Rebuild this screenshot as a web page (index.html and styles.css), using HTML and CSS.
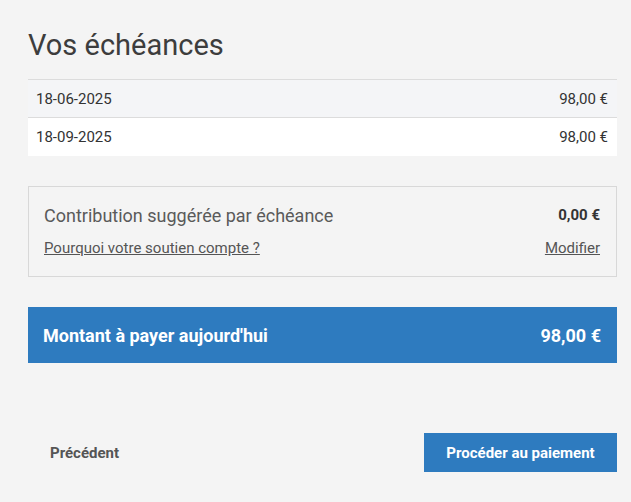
FILE: index.html
```html
<html>

<head>
    <title>Vos échéances</title>
    <link rel="stylesheet" href="styles.css">
</head>

<body>
    <div id="page">
        <h1>Vos échéances</h1>
        <div class="schedule">
            <div class="row odd">
                <span>18-06-2025</span>
                <span>98,00 €</span>
            </div>
            <div class="row">
                <span>18-09-2025</span>
                <span>98,00 €</span>
            </div>
        </div>
        <div class="contrib">
            <div class="contrib-top">
                <p class="contrib-label">Contribution suggérée par échéance</p>
                <p class="contrib-amount">0,00 €</p>
            </div>
            <div class="contrib-links">
                <a href="#">Pourquoi votre soutien compte ?</a>
                <a href="#">Modifier</a>
            </div>
        </div>
        <div class="total">
            <span>Montant à payer aujourd'hui</span>
            <span>98,00 €</span>
        </div>
        <div class="actions">
            <button class="backbtn">Précédent</button>
            <button class="paybtn">Procéder au paiement</button>
        </div>
    </div>
</body>

</html>
```

FILE: styles.css
```css
* {
    margin: 0;
    padding: 0;
    box-sizing: border-box;
}

body {
    background-color: #f4f4f4;
    font-family: 'Roboto', sans-serif;
    color: #333;
}

#page {
    padding: 28px 14px 0 28px;
}

h1 {
    font-size: 29px;
    font-weight: 400;
    color: #3d3d3d;
    line-height: 34px;
    margin-bottom: 17px;
}

.schedule {
    border-top: 1px solid #dcdcdc;
}

.row {
    display: flex;
    justify-content: space-between;
    align-items: center;
    height: 38px;
    padding: 0 9px 0 8px;
    font-size: 15px;
    color: #333;
    background-color: #fff;
}

.row.odd {
    background-color: #f4f5f7;
    border-bottom: 1px solid #dcdcdc;
}

.contrib {
    margin-top: 30px;
    border: 1px solid #d8d8d8;
    padding: 18px 16px 18px 15px;
}

.contrib-top {
    display: flex;
    justify-content: space-between;
    align-items: flex-start;
}

.contrib-label {
    font-size: 18px;
    color: #5a5a5a;
    line-height: 22px;
}

.contrib-amount {
    font-size: 15px;
    font-weight: 700;
    color: #333;
    line-height: 20px;
}

.contrib-links {
    display: flex;
    justify-content: space-between;
    margin-top: 11px;
}

.contrib-links a {
    font-size: 15px;
    color: #555;
    line-height: 20px;
}

.total {
    margin-top: 30px;
    height: 56px;
    background-color: #2e7bbf;
    color: #fff;
    display: flex;
    justify-content: space-between;
    align-items: center;
    padding: 0 16px 0 15px;
    font-size: 18px;
    font-weight: 700;
}

.actions {
    margin-top: 70px;
    display: flex;
    justify-content: space-between;
    align-items: center;
}

.actions button {
    font-family: 'Roboto', sans-serif;
    font-size: 15px;
    font-weight: 700;
    border: none;
    cursor: pointer;
}

.backbtn {
    background: none;
    color: #555;
    padding: 0 22px;
    height: 39px;
}

.paybtn {
    background-color: #2e7bbf;
    color: #fff;
    height: 39px;
    width: 193px;
}
```
